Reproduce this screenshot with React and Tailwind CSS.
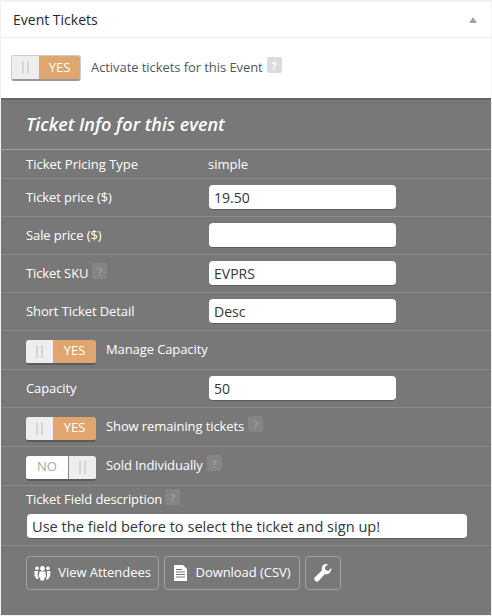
import React from "react";

function Help({ dark, left = 5 }) {
  return (
    <span className={`inline-flex h-[16px] w-[15px] -translate-y-[3px] items-center justify-center rounded-[2px] text-[11px] font-bold leading-none ${left === 3 ? "ml-[3px]" : "ml-[4px]"} ${dark ? "bg-[#858585] text-[#9a9a9a]" : "bg-[#dcdcdc] text-white"}`}>
      ?
    </span>
  );
}

function Grip() {
  return (
    <span className="flex h-full w-[27px] items-center justify-center gap-[3px] bg-[#eeeeee]">
      <i className="h-[13px] w-[2px] bg-[#d6d6d6]" />
      <i className="h-[13px] w-[2px] bg-[#d6d6d6]" />
    </span>
  );
}

function Toggle({ on = true, light }) {
  return (
    <div className={`flex w-[70px] overflow-hidden rounded-[3px] border-b-[2px] text-[13px] ${light ? "h-[26px] border-x border-t border-x-[#cccccc] border-t-[#cccccc] border-b-[#999999]" : "mt-[4px] h-[25px] border-[#5c5c5c]"}`}>
      {on ? (
        <>
          <Grip />
          <span className="flex flex-1 items-center justify-center bg-[#dfa66f] font-medium text-white">YES</span>
        </>
      ) : (
        <>
          <span className="flex flex-1 items-center justify-center border-r border-[#888888] bg-white font-medium text-[#aaaaaa]">NO</span>
          <Grip />
        </>
      )}
    </div>
  );
}

function Field({ label, value, help }) {
  return (
    <div className="flex h-[38px] items-center border-b border-[#8a8a8a] pl-[25px] pb-[1px]">
      <div className="flex w-[183px] items-center pt-[2px] tracking-[-0.1px] text-white">
        {label}
        {help && <Help dark />}
      </div>
      <input
        readOnly
        value={value}
        className="h-[25px] w-[187px] rounded-[4px] border-b border-[#5c5c5c] bg-white px-[5px] pt-[1px] text-[14px] text-[#32373c] outline-none"
      />
    </div>
  );
}

function ToggleRow({ label, on, help }) {
  return (
    <div className="flex h-[39px] items-center border-b border-[#8a8a8a] pl-[25px]">
      <Toggle on={on} />
      <span className="ml-[10px] flex items-center tracking-[-0.1px] text-white">
        {label}
        {help && <Help dark />}
      </span>
    </div>
  );
}

function Btn({ children, w }) {
  return (
    <div className={`flex h-[34px] items-center justify-center gap-[7px] rounded-[4px] border border-[#a2a2a2] tracking-[-0.05px] text-white ${w}`}>
      {children}
    </div>
  );
}

export default function App() {
  return (
    <div className="h-[616px] w-[492px] bg-[#f1f1f1] pt-[2px] pr-[1px] pb-[1px] pl-[1px] font-['Open_Sans',sans-serif] text-[13px]">
      {/* white box */}
      <div className="flex h-[36px] items-center justify-between border-b border-[#eeeeee] bg-white pr-[14px] pl-[12px]">
        <h3 className="text-[14px] leading-none text-[#23282d]">Event Tickets</h3>
        <svg width="8" height="6" viewBox="0 0 8 6"><path d="M4 0L8 6H0Z" fill="#a0a5aa" /></svg>
      </div>
      <div className="flex h-[60px] items-center bg-white pl-[10px]">
        <Toggle light />
        <span className="ml-[10px] flex items-center tracking-[-0.07px] text-[#50575e]">
          Activate tickets for this Event
          <Help />
        </span>
      </div>

      {/* ticket info */}
      <div className="h-[517px] border-t-[2px] border-[#666666] bg-[#787878]">
        <div className="flex h-[50px] items-center border-b border-[#a0a0a0] pl-[25px] text-[18px] font-semibold italic text-white">
          Ticket Info for this event
        </div>
        <div className="flex h-[29px] items-center border-b border-[#8a8a8a] pt-[2px] pl-[25px] text-white">
          <span className="w-[182px]">Ticket Pricing Type</span>
          <span>simple</span>
        </div>
        <Field label="Ticket price ($)" value="19.50" />
        <Field label="Sale price ($)" value="" />
        <Field label="Ticket SKU" value="EVPRS" help />
        <Field label="Short Ticket Detail" value="Desc" />
        <ToggleRow label="Manage Capacity" />
        <Field label="Capacity" value="50" />
        <ToggleRow label="Show remaining tickets" help />
        <ToggleRow label="Sold Individually" on={false} help />
        <div className="h-[60px] border-b border-[#8a8a8a] pt-[5px] pl-[25px] text-white">
          <div className="flex h-[18px] items-center tracking-[-0.1px]">
            Ticket Field description
            <Help dark left={3} />
          </div>
          <input
            readOnly
            value="Use the field before to select the ticket and sign up!"
            className="mt-[5px] ml-[1px] h-[25px] w-[440px] rounded-[4px] border-b border-[#5c5c5c] bg-white px-[5px] text-[14.6px] text-[#32373c] outline-none"
          />
        </div>
        <div className="flex gap-[5px] pt-[10px] pl-[25px]">
          <Btn w="w-[133px]">
            <svg width="17" height="16" viewBox="0 0 17 15" fill="white">
              <circle cx="8.5" cy="3" r="2.4" />
              <circle cx="3" cy="2.8" r="1.8" />
              <circle cx="14" cy="2.8" r="1.8" />
              <path d="M5.6 6h5.8l.6 5.5-1.5.6-.5 2.900H6.500L6 12.100l-1.500-.6Z" />
              <path d="M.5 5.500h3.400L3.500 11l.9.800-.2 1.700-2.200-.3-.4-1.900-1.100-.6ZM13.100 5.500h3.400l-.5 5.700-1.100.6-.4 1.900-2.200.3-.2-1.700.9-.8Z" />
            </svg>
            View Attendees
          </Btn>
          <Btn w="w-[136px]">
            <svg width="13" height="16" viewBox="0 0 13 16" className="mr-[2px]">
              <path d="M0 0h9l4 4v12H0Z" fill="white" />
              <path d="M2 4.500h6M2 7h9M2 9.500h9M2 12h9" stroke="#787878" strokeWidth="1" />
            </svg>
            Download (CSV)
          </Btn>
          <Btn w="w-[36px]">
            <svg width="18" height="18" viewBox="0 0 17 17">
              <path d="M16.500 3.500l-3 3-2.500-.8-.8-2.500 3-2.900c-2-.7-4.300-.1-5.300 1.600-.8 1.300-.8 2.700-.3 3.900L.8 12.600c-.8.800-.8 2 0 2.900l.6.600c.9.800 2.100.8 2.900 0l6-6.700c1.300.5 2.800.3 4-.6 1.500-1.200 2.200-3.300 2.200-5.300Z" fill="white" />
            </svg>
          </Btn>
        </div>
      </div>
    </div>
  );
}
